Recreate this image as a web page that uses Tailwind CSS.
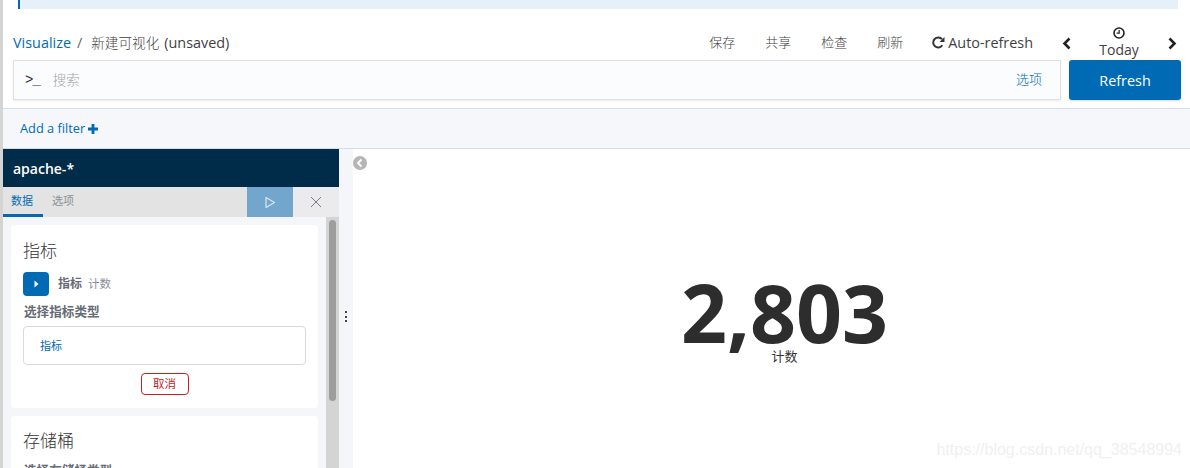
<!DOCTYPE html>
<html>
    <head>
        <meta charset="UTF-8">
        <meta name="viewport" content="width=device-width, initial-scale=1.0">
        <script src="https://cdn.jsdelivr.net/npm/@tailwindcss/browser@4"></script>
        <title>Visualize</title>
    </head>
    <body class="h-[468px] w-[1190px] overflow-hidden bg-white font-['Open_Sans','Noto_Sans_CJK_SC',sans-serif] text-[#3f3f3f]">
        <div class="flex h-[468px]">
            <div class="w-[3px] shrink-0 bg-[#d4d4d4]"></div>
            <div class="flex min-w-0 flex-1 flex-col">
                <!-- banner -->
                <div class="ml-[15px] mr-[12px] h-[9px] shrink-0 border-l-2 border-[#006bb4] bg-[#e6f0f8]"></div>

                <!-- breadcrumb + menu -->
                <div class="flex h-[51px] shrink-0 items-start pl-[10px]">
                    <div class="mt-[24px] flex items-center text-[14.4px] leading-[19px]">
                        <a class="text-[#006bb4]">Visualize</a>
                        <span class="ml-[6px] mr-[9px] text-[#666]">/</span>
                        <span class="text-[13.6px] font-light">新建可视化</span>
                        <span class="ml-[5px]">(unsaved)</span>
                    </div>
                    <div class="ml-auto flex items-start text-[14.4px]">
                        <span class="mt-[24px] text-[13px] leading-[19px] font-light">保存</span>
                        <span class="mt-[24px] ml-[30px] text-[13px] leading-[19px] font-light">共享</span>
                        <span class="mt-[24px] ml-[30px] text-[13px] leading-[19px] font-light">检查</span>
                        <span class="mt-[24px] ml-[30px] text-[13px] leading-[19px] font-light">刷新</span>
                        <span class="mt-[24px] ml-[29px] flex items-center leading-[19px]">
                            <svg class="mr-[3px]" width="13" height="13" viewBox="0 0 13 13" fill="none"><path d="M10.3 9.3A5 5 0 1 1 10 3.2" stroke="#333" stroke-width="2"/><path d="M12.5 1v5h-5z" fill="#333"/></svg>
                            Auto-refresh
                        </span>
                        <svg class="mt-[28px] ml-[28px]" width="11" height="13" viewBox="0 0 11 13" fill="none"><path d="M8.5 1.5 3.5 6.5l5 5" stroke="#222" stroke-width="2.6"/></svg>
                        <span class="ml-[21px] flex w-[52px] flex-col items-center pt-[18px]">
                            <svg width="12" height="12" viewBox="0 0 12 12" fill="none"><circle cx="6" cy="6" r="5" stroke="#222" stroke-width="1.6"/><path d="M6.2 3v3.2H3.6" stroke="#222" stroke-width="1.2"/></svg>
                            <span class="mt-[1px] text-[14px] leading-[19px]">Today</span>
                        </span>
                        <svg class="mt-[28px] ml-[22px] mr-[12px]" width="11" height="13" viewBox="0 0 11 13" fill="none"><path d="M2.5 1.5l5 5-5 5" stroke="#222" stroke-width="2.6"/></svg>
                    </div>
                </div>

                <!-- search row -->
                <div class="flex h-[49px] shrink-0 items-start border-b border-[#d3dce8] pl-[10px] pr-[9px]">
                    <div class="flex h-[40px] w-[1048px] items-center border border-[#e0e0e0] bg-[#fbfcfd] pl-[11px] pr-[18px] shadow-[0_1px_2px_rgba(0,0,0,0.08)]">
                        <span class="font-['Liberation_Mono'] text-[14px] tracking-[-1px] text-[#333]">&gt;_</span>
                        <span class="ml-[13px] text-[13.5px] font-light text-[#a3a3a3]">搜索</span>
                        <span class="ml-auto text-[13px] font-light text-[#006bb4]">选项</span>
                    </div>
                    <button class="ml-[8px] h-[40px] w-[112px] rounded-[3px] bg-[#006bb4] pt-[1px] text-[14.4px] text-white shadow-[0_1px_2px_rgba(0,0,0,0.15)]">Refresh</button>
                </div>

                <!-- filter bar -->
                <div class="flex h-[40px] shrink-0 items-center border-b border-[#d3dce8] bg-[#f5f7fa] pl-[17px] pt-[1px] text-[12.8px] text-[#006bb4]">
                    Add a filter
                    <svg class="ml-[3px]" width="10" height="10" viewBox="0 0 10 10"><path d="M3.6 0h2.8v3.6H10v2.8H6.4V10H3.6V6.4H0V3.6h3.6z" fill="#006bb4"/></svg>
                </div>

                <div class="flex min-h-0 flex-1">
                    <!-- sidebar -->
                    <div class="flex w-[336px] shrink-0 flex-col bg-[#f5f6fa]">
                        <div class="flex h-[38px] shrink-0 items-center bg-[#002b49] pl-[10px] text-[14px] font-semibold text-white">apache-*</div>
                        <div class="flex h-[30px] shrink-0 bg-[#e3e3e3]">
                            <div class="flex h-[30px] w-[40px] items-center justify-center border-b-[3px] border-[#006bb4] pr-[2px] pt-[2px] text-[11px] text-[#006bb4]">数据</div>
                            <div class="flex h-[30px] w-[40px] items-center justify-center pt-[2px] pb-[3px] text-[11px] text-[#8a8f99]">选项</div>
                            <div class="ml-auto flex w-[46px] items-center justify-center bg-[#72a6cc]">
                                <svg width="12" height="13" viewBox="0 0 12 13" fill="none"><path d="M2 1.5v10l8.5-5z" stroke="#d8e6f1" stroke-width="1.2" stroke-linejoin="round"/></svg>
                            </div>
                            <div class="flex w-[46px] items-center justify-center bg-[#ebebed]">
                                <svg width="12" height="12" viewBox="0 0 12 12" fill="none"><path d="M1 1l10 10M11 1 1 11" stroke="#7c7c7c" stroke-width="1"/></svg>
                            </div>
                        </div>
                        <div class="flex min-h-0 flex-1">
                            <div class="min-w-0 flex-1 overflow-hidden px-[8px] pt-[8px]">
                                <div class="h-[183px] rounded-[4px] bg-white px-[12px] pt-[14px]">
                                    <div class="text-[17px] leading-[24px] font-light text-[#333]">指标</div>
                                    <div class="mt-[9px] flex items-center">
                                        <div class="flex h-[24px] w-[26px] items-center justify-center rounded-[4px] bg-[#006bb4]">
                                            <svg width="5" height="8" viewBox="0 0 5 8"><path d="M0.5 0.5 4.5 4 0.5 7.5z" fill="#fff"/></svg>
                                        </div>
                                        <span class="ml-[9px] text-[12px] font-bold text-[#666b75]">指标</span>
                                        <span class="ml-[6px] text-[11.5px] text-[#8a8f99]">计数</span>
                                    </div>
                                    <div class="mt-[9px] pl-[1px] text-[12.6px] leading-[14px] font-bold text-[#666b75]">选择指标类型</div>
                                    <div class="mt-[7px] flex h-[39px] w-[283px] items-center rounded-[4px] border border-[#d9d9d9] pl-[16px] pt-[2px] text-[11px] text-[#006bb4]">指标</div>
                                    <div class="mt-[8px] flex w-[283px] justify-center">
                                        <button class="h-[22px] w-[48px] rounded-[4px] border border-[#c7231d] text-[11.5px] text-[#c7231d]">取消</button>
                                    </div>
                                </div>
                                <div class="mt-[8px] h-[100px] rounded-[4px] bg-white px-[12px] pt-[13px]">
                                    <div class="text-[17px] leading-[24px] font-light text-[#333]">存储桶</div>
                                    <div class="mt-[11px] pl-[1px] text-[12.6px] leading-[14px] font-bold text-[#666b75]">选择存储桶类型</div>
                                </div>
                            </div>
                            <div class="w-[13px] shrink-0 bg-[#d4d4d4] px-[3px] pt-[3px]">
                                <div class="h-[181px] rounded-full bg-[#9d9d9d]"></div>
                            </div>
                        </div>
                    </div>

                    <!-- resize handle -->
                    <div class="relative w-[14px] shrink-0 bg-[#f5f6fa]">
                        <div class="absolute left-[6px] top-[162px] flex flex-col gap-[2.5px]">
                            <div class="h-[2px] w-[2px] bg-[#444]"></div>
                            <div class="h-[2px] w-[2px] bg-[#444]"></div>
                            <div class="h-[2px] w-[2px] bg-[#444]"></div>
                        </div>
                    </div>

                    <!-- metric -->
                    <div class="relative min-w-0 flex-1 bg-white">
                        <svg class="absolute left-[0px] top-[7px]" width="14" height="14" viewBox="0 0 14 14"><circle cx="7" cy="7" r="7" fill="#b5b5b5"/><path d="M8.5 3.5 5 7l3.5 3.5" stroke="#fff" stroke-width="2" fill="none"/></svg>
                        <div class="flex flex-col items-center pl-[26px] pt-[127px]">
                            <div class="text-[80.5px] leading-[72px] font-bold text-[#2d2d2d]">2,803</div>
                            <div class="text-[13px] leading-[16px] text-[#333]">计数</div>
                        </div>
                        <div class="absolute bottom-[9px] right-[8px] font-['Liberation_Sans'] text-[16px] leading-[18px] text-[#f0f0f0]">https://blog.csdn.net/qq_38548994</div>
                    </div>
                </div>
            </div>
        </div>
    </body>
</html>
